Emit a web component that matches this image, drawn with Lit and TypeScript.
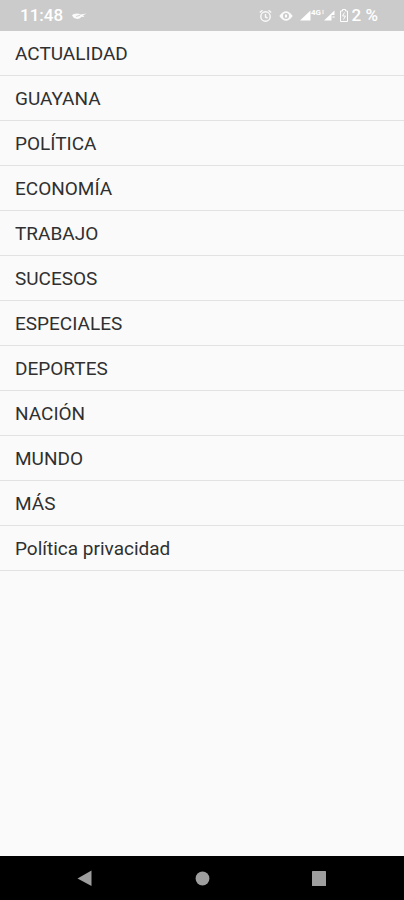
import { LitElement, html, css } from "lit";
import { customElement } from "lit/decorators.js";

const SECTIONS = [
  "ACTUALIDAD",
  "GUAYANA",
  "POLÍTICA",
  "ECONOMÍA",
  "TRABAJO",
  "SUCESOS",
  "ESPECIALES",
  "DEPORTES",
  "NACIÓN",
  "MUNDO",
  "MÁS",
  "Política privacidad",
];

@customElement("status-bar")
export class StatusBar extends LitElement {
  static styles = css`
    :host {
      display: flex;
      align-items: center;
      justify-content: space-between;
      height: 31px;
      padding: 0 26px 0 20px;
      box-sizing: border-box;
      background: #cbcbcb;
      color: #fff;
      font-size: 17px;
      font-weight: 500;
      line-height: 31px;
    }
    .side {
      display: flex;
      align-items: center;
    }
    .left {
      gap: 9px;
    }
    svg {
      display: block;
      flex: none;
    }
    .alarm,
    .eye {
      margin-right: 7px;
    }
    .signal {
      margin-right: 4px;
    }
    .battery {
      margin-right: 4px;
    }
    .net {
      font: 700 8px Roboto, sans-serif;
      fill: #fff;
    }
  `;

  render() {
    return html`
      <div class="side left">
        <time>11:48</time>
        <svg width="15" height="10" viewBox="0 0 15 10" aria-hidden="true">
          <path d="M0 4.500Q1 2.500 5 2.500Q7 2.500 8.500 3.500L14.500 2.500L11 4.500L12.500 6L9.500 5.800Q8 8.500 4.500 7.800Q1 7 0 4.500Z" fill="#fff" opacity=".9" />
          <path d="M4 5.500L8 4.300" stroke="#cbcbcb" stroke-width=".8" />
        </svg>
      </div>
      <div class="side">
        <svg class="alarm" width="13" height="14" viewBox="0 0 13 14" fill="none" stroke="#fff" stroke-width="1.400" opacity=".9" aria-hidden="true">
          <circle cx="6.500" cy="7.500" r="4.700" />
          <path d="M6.500 5V8L8.500 9M.8 3.500L3.500 1.300M12.200 3.500L9.500 1.300" />
        </svg>
        <svg class="eye" width="14" height="12" viewBox="0 0 14 12" aria-hidden="true">
          <path d="M.3 6Q3.500 1.300 7 1.300Q10.500 1.300 13.700 6Q10.500 10.700 7 10.700Q3.500 10.700 .3 6Z" fill="#fff" opacity=".9" />
          <circle cx="7" cy="6" r="3" fill="#cbcbcb" />
          <ellipse cx="7" cy="6" rx="1.200" ry="1.800" fill="#fff" />
        </svg>
        <svg class="signal" width="36" height="18" viewBox="0 0 36 18" fill="#fff" aria-hidden="true">
          <path d="M0 13.500L10.500 3.500V13.500Z" />
          <text class="net" x="11" y="7.500">4G</text>
          <path d="M22 4.500L23 2.500L24 4.500ZM22 5.500H24L23 7.500Z" />
          <path d="M24 13.500L34.500 3.500V8H31.500V13.500Z" />
          <path d="M32.500 9L34.500 11M34.500 9L32.500 11" stroke="#fff" stroke-width=".7" />
        </svg>
        <svg class="battery" width="8" height="13" viewBox="0 0 8 13" fill="none" stroke="#fff" aria-hidden="true">
          <path d="M.5 2H2.500V.5H5.500V2H7.500V12.500H.5Z" />
          <path d="M4.500 3.500L2.500 7H5.500L3.500 10.500" />
        </svg>
        <span>2 %</span>
      </div>
    `;
  }
}

@customElement("section-menu")
export class SectionMenu extends LitElement {
  static styles = css`
    :host {
      display: block;
      flex: 1;
    }
    ul {
      margin: 0;
      padding: 0;
      list-style: none;
    }
    a {
      display: block;
      padding: 2px 15px 0;
      border-bottom: 1px solid #e2e2e2;
      color: #303030;
      font-size: 19px;
      line-height: 42px;
      text-decoration: none;
    }
  `;

  render() {
    return html`
      <nav aria-label="Secciones">
        <ul>
          ${SECTIONS.map((name) => html`<li><a href="#">${name}</a></li>`)}
        </ul>
      </nav>
    `;
  }
}

@customElement("system-nav")
export class SystemNav extends LitElement {
  static styles = css`
    :host {
      display: grid;
      grid-template-columns: repeat(3, 1fr);
      height: 44px;
      padding: 0 26px;
      background: #000;
    }
    button {
      display: flex;
      align-items: center;
      justify-content: center;
      padding: 0;
      border: 0;
      background: none;
    }
    svg {
      display: block;
      fill: #9e9e9e;
    }
  `;

  render() {
    return html`
      <button aria-label="Atrás">
        <svg width="16" height="16" viewBox="0 0 16 16"><path d="M.5 8.500L14.500 .5V16Z" /></svg>
      </button>
      <button aria-label="Inicio">
        <svg width="16" height="16" viewBox="0 0 16 16"><circle cx="8.500" cy="8.500" r="6.900" /></svg>
      </button>
      <button aria-label="Recientes">
        <svg width="16" height="16" viewBox="0 0 16 16"><rect x="1" y="1" width="14" height="15" rx=".5" /></svg>
      </button>
    `;
  }
}

@customElement("app-root")
export class AppRoot extends LitElement {
  static styles = css`
    :host {
      display: flex;
      flex-direction: column;
      min-height: 100vh;
      background: #fafafa;
      font-family: Roboto, sans-serif;
    }
  `;

  render() {
    return html`
      <status-bar></status-bar>
      <section-menu></section-menu>
      <system-nav></system-nav>
    `;
  }
}
